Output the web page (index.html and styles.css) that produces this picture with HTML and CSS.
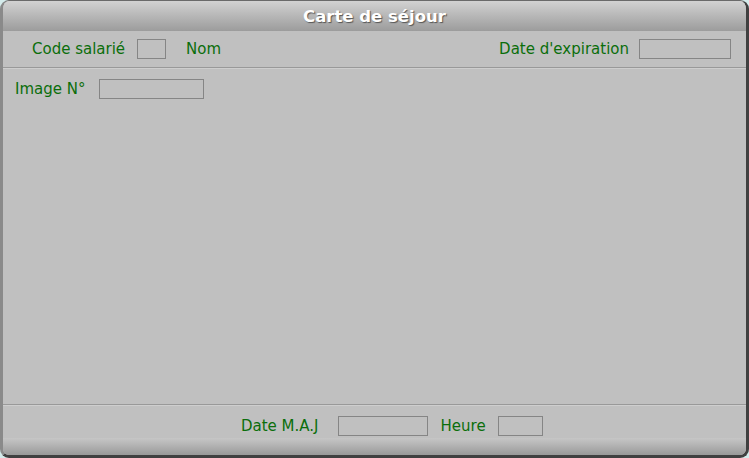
FILE: index.html
```html
<!DOCTYPE html>
<html lang="fr">
<head>
    <meta charset="UTF-8">
    <title>Carte de séjour</title>
    <link rel="stylesheet" href="styles.css">
</head>
<body>
    <div class="window">
        <div class="title-bar">Carte de séjour</div>

        <div class="header-row">
            <span class="label">Code salarié</span>
            <span class="field field-code"></span>
            <span class="label label-nom">Nom</span>
            <span class="spacer"></span>
            <span class="label">Date d'expiration</span>
            <span class="field field-date"></span>
        </div>

        <div class="separator"></div>

        <div class="content">
            <div class="row">
                <span class="label">Image N°</span>
                <span class="field field-image"></span>
            </div>
        </div>

        <div class="separator"></div>

        <div class="footer-row">
            <span class="label">Date M.A.J</span>
            <span class="field field-maj"></span>
            <span class="label label-heure">Heure</span>
            <span class="field field-heure"></span>
        </div>

        <div class="bottom-bar"></div>
    </div>
</body>
</html>
```

FILE: styles.css
```css
* {
    margin: 0;
    padding: 0;
    box-sizing: border-box;
}

body {
    width: 749px;
    height: 458px;
    background: #d4ebeb;
    font-family: 'DejaVu Sans', Verdana, sans-serif;
    font-size: 15px;
    overflow: hidden;
}

.window {
    width: 749px;
    height: 458px;
    display: flex;
    flex-direction: column;
    background: #c0c0c0;
    border-top: 1px solid #6a6a6a;
    border-left: 3px solid #8a8a8a;
    border-right: 3px solid #404040;
    border-bottom: 3px solid #404040;
    border-radius: 9px;
    overflow: hidden;
}

.title-bar {
    height: 30px;
    flex-shrink: 0;
    background: linear-gradient(#d2d2d2, #bcbcbc 40%, #9c9c9c);
    color: #fff;
    font-weight: bold;
    font-size: 16.5px;
    line-height: 31px;
    text-align: center;
    text-shadow: 1px 1px 1px #555;
}

.label {
    color: #0b6e0b;
    white-space: nowrap;
}

.field {
    display: inline-block;
    height: 20px;
    border: 1px solid #858585;
    background: #c0c0c0;
    flex-shrink: 0;
}

.header-row {
    height: 36px;
    flex-shrink: 0;
    display: flex;
    align-items: center;
    padding: 0 15px 0 29px;
}

.field-code { width: 29px; margin-left: 12px; }
.label-nom { margin-left: 20px; }
.spacer { flex: 1; }
.field-date { width: 92px; margin-left: 10px; }

.separator {
    height: 2px;
    flex-shrink: 0;
    background: #999;
    border-bottom: 1px solid #cecece;
}

.content {
    flex: 1;
    padding: 10px 12px;
}

.row {
    display: flex;
    align-items: center;
}

.field-image { width: 105px; margin-left: 14px; }

.footer-row {
    height: 32px;
    flex-shrink: 0;
    display: flex;
    align-items: flex-start;
    padding: 10px 0 0 238px;
}

.footer-row .label { line-height: 20px; }

.field-maj { width: 90px; margin-left: 19px; }
.label-heure { margin-left: 13px; }
.field-heure { width: 45px; margin-left: 12px; }

.bottom-bar {
    height: 17px;
    flex-shrink: 0;
    background: linear-gradient(#c6c6c6, #b0b0b0 50%, #999);
}
```
